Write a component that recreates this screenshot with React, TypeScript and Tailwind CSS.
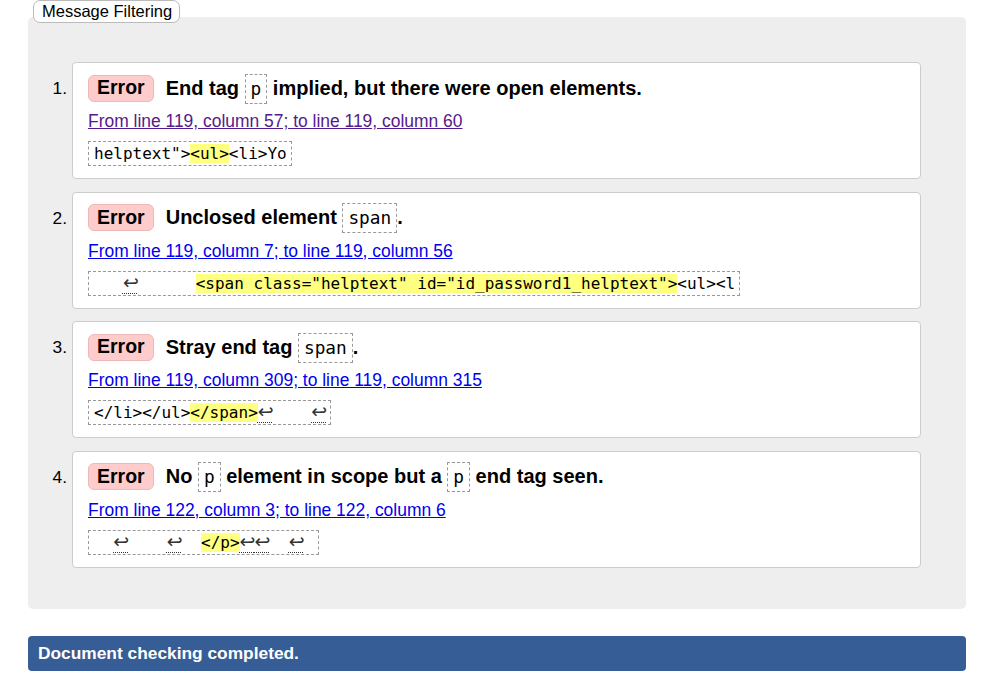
import React from "react";

type Seg = { t: string; hl?: boolean; lf?: boolean };

const LF = () => (
  <span className="inline-block w-[15px] text-center font-['DejaVu_Sans',sans-serif] text-[19px] leading-[20px] text-[#333] underline decoration-dotted decoration-[1px] underline-offset-[4px]">
    ↩
  </span>
);

const Code = ({ children }: { children: React.ReactNode }) => (
  <code className="inline-block border border-dashed border-[#999] px-[5px] font-['DejaVu_Sans_Mono',monospace] text-[17.8px] font-normal leading-[28px]">
    {children}
  </code>
);

type Item = {
  msg: React.ReactNode;
  link: string;
  visited?: boolean;
  extract: Seg[];
};

const items: Item[] = [
  {
    msg: (
      <>
        End tag <Code>p</Code> implied, but there were open elements.
      </>
    ),
    link: "From line 119, column 57; to line 119, column 60",
    visited: true,
    extract: [{ t: 'helptext">' }, { t: "<ul>", hl: true }, { t: "<li>Yo" }],
  },
  {
    msg: (
      <>
        Unclosed element <Code>span</Code>.
      </>
    ),
    link: "From line 119, column 7; to line 119, column 56",
    extract: [
      { t: "   " },
      { t: "", lf: true },
      { t: "      " },
      { t: '<span class="helptext" id="id_password1_helptext">', hl: true },
      { t: "<ul><l" },
    ],
  },
  {
    msg: (
      <>
        Stray end tag <Code>span</Code>.
      </>
    ),
    link: "From line 119, column 309; to line 119, column 315",
    extract: [
      { t: "</li></ul>" },
      { t: "</span>", hl: true },
      { t: "", lf: true },
      { t: "    " },
      { t: "", lf: true },
    ],
  },
  {
    msg: (
      <>
        No <Code>p</Code> element in scope but a <Code>p</Code> end tag seen.
      </>
    ),
    link: "From line 122, column 3; to line 122, column 6",
    extract: [
      { t: "  " },
      { t: "", lf: true },
      { t: "    " },
      { t: "", lf: true },
      { t: "  " },
      { t: "</p>", hl: true },
      { t: "", lf: true },
      { t: "", lf: true },
      { t: "  " },
      { t: "", lf: true },
      { t: " " },
    ],
  },
];

export default function App() {
  return (
    <div className="min-h-[677px] bg-white font-['Liberation_Sans',Arial,sans-serif] text-[17.33px] text-black">
      <div className="ml-[28px] mr-[26px] pt-[17px]">
        <div className="relative rounded-[5px] bg-[#eeeeee] pt-[45px] pb-[29px] pr-[45px]">
          <div className="absolute -top-[17px] left-[5px] rounded-[7px] border border-[#bbbbbb] bg-white pl-[8px] pr-[7px] text-[16.5px] leading-[21px]">
            Message Filtering
          </div>
          <ol>
            {items.map((it, i) => (
              <li key={i} className="mb-[12.5px] flex">
                <div className="w-[44px] shrink-0 pt-[11px] pr-[5px] text-right leading-[30px]">
                  {i + 1}.
                </div>
                <div className="flex-1 rounded-[4px] border border-[#cccccc] bg-white pt-[10px] pb-[12px] pl-[15px]">
                  <div className="flex h-[30px] items-center">
                    <span className="flex h-[27px] items-center rounded-[6px] border border-[#eeb8b8] bg-[#ffcccc] px-[8px] text-[19.5px] font-bold">
                      Error
                    </span>
                    <span className="ml-[12px] text-[20px] font-bold leading-[30px]">{it.msg}</span>
                  </div>
                  <div className="mt-[8px] leading-[20px]">
                    <a
                      href="#"
                      className={
                        it.visited
                          ? "text-[17.45px] text-[#551a8b] underline"
                          : "text-[17.45px] text-[#0000ee] underline"
                      }
                    >
                      {it.link}
                    </a>
                  </div>
                  <div className="mt-[10px] flex">
                    <code className="block h-[25px] whitespace-pre border border-dashed border-[#999] pl-[5px] pr-[4px] font-['DejaVu_Sans_Mono',monospace] text-[16px] leading-[23px]">
                      {it.extract.map((s, j) =>
                        s.lf ? (
                          <LF key={j} />
                        ) : s.hl ? (
                          <b key={j} className="bg-[#ffff80] font-normal">
                            {s.t}
                          </b>
                        ) : (
                          <span key={j}>{s.t}</span>
                        )
                      )}
                    </code>
                  </div>
                </div>
              </li>
            ))}
          </ol>
        </div>
        <div className="mt-[27px] rounded-[4px] bg-[#365d95] px-[10px] text-[17.33px] font-bold leading-[35px] text-white">
          Document checking completed.
        </div>
      </div>
    </div>
  );
}
